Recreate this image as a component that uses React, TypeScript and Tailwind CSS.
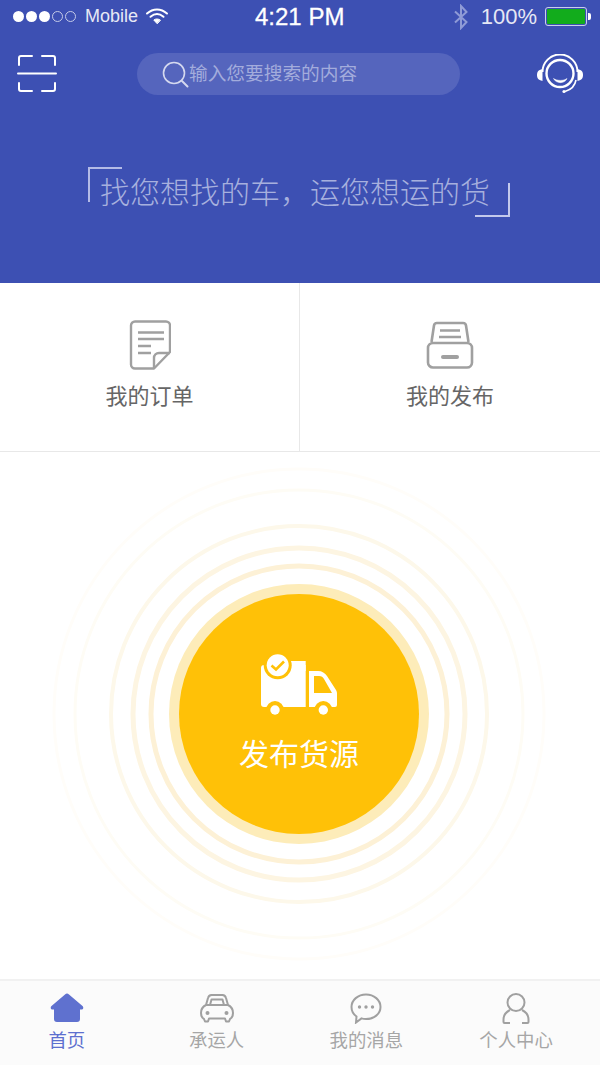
import React from "react";

const font = { fontFamily: '"Liberation Sans", "Noto Sans CJK SC", sans-serif' };

function Wifi() {
  return (
    <svg width="24" height="18" viewBox="0 0 24 18" fill="none" stroke="#fff" strokeLinecap="round">
      <path d="M2 6.5C8 1 16 1 22 6.5" strokeWidth="2" />
      <path d="M5.5 9.8C9.5 6.4 14.5 6.4 18.5 9.8" strokeWidth="2" />
      <path d="M12 16.5L8.8 13C10.8 11.6 13.2 11.6 15.2 13Z" fill="#fff" strokeWidth="1" />
    </svg>
  );
}

function StatusBar() {
  return (
    <div className="relative h-[33px] flex items-center text-white">
      <div className="flex items-center gap-[2px] pl-[13px] w-[250px]">
        {[1, 1, 1, 0, 0].map((f, i) => (
          <span
            key={i}
            className={f ? "w-[11px] h-[11px] rounded-full bg-white" : "w-[11px] h-[11px] rounded-full border border-[#c5cbe8]"}
          />
        ))}
        <span className="ml-[7px] text-[18px] text-[#e6e8f5]">Mobile</span>
        <span className="ml-[5px] -mt-[2px]"><Wifi /></span>
      </div>
      <span className="absolute left-[255px] top-[3px] text-[24px] leading-[27px] [-webkit-text-stroke:0.3px_white]">4:21 PM</span>
      <div className="ml-auto flex items-center pr-[9px]">
        <svg width="18" height="26" viewBox="0 0 18 26" fill="none" stroke="#8f9bd6" strokeWidth="2" className="mr-[11px] mt-[1px]">
          <path d="M3 7.5L14.5 18L9 24V2L14.5 8L3 18.5" />
        </svg>
        <span className="text-[22px] leading-[27px] text-[#e6e8f5]">100%</span>
        <div className="ml-[8px] w-[42px] h-[19px] border border-[#c9cfeb] rounded-[3px] p-[1px]">
          <div className="w-full h-full bg-[#12ac1c] rounded-[1px]" />
        </div>
        <span className="ml-[1px] w-[3px] h-[7px] bg-white rounded-r-[2px]" />
      </div>
    </div>
  );
}

function Scan() {
  return (
    <svg width="40" height="40" viewBox="0 0 40 40" fill="none" stroke="#fff" strokeWidth="2" strokeLinecap="round">
      <path d="M2 11V4a2 2 0 0 1 2-2h11M25 2h11a2 2 0 0 1 2 2v7" />
      <path d="M2 29v6a2 2 0 0 0 2 2h11M25 37h11a2 2 0 0 0 2-2v-6" />
      <path d="M1 19.5h38" />
    </svg>
  );
}

function Headset() {
  return (
    <svg width="46" height="40" viewBox="0 0 46 40" fill="none" stroke="#fff">
      <path d="M5.5 18A17.5 17.5 0 0 1 40.5 18" strokeWidth="2" />
      <circle cx="23" cy="19.5" r="13.5" strokeWidth="2.4" />
      <path d="M16.500 24.500C20 27 27 27 30 24.500C28 30 19 30 16.500 24.500Z" fill="#fff" strokeWidth="0.5" />
      <path d="M5.500 15C1 16 0 18 0 21S1 26 5.500 27Z" fill="#fff" stroke="none" />
      <path d="M40.500 15C45 16 46 18 46 21S45 26 40.500 27Z" fill="#fff" stroke="none" />
      <path d="M39 26C38 32 33 36 28 37.500" strokeWidth="1.6" />
      <circle cx="27" cy="37.500" r="1.600" fill="#fff" stroke="none" />
    </svg>
  );
}

function Header() {
  return (
    <div className="bg-[#3d50b3] h-[283px] flex flex-col">
      <StatusBar />
      <div className="h-[82px] flex items-center pl-[17px] pr-[17px]">
        <Scan />
        <div className="ml-[80px] w-[323px] h-[42px] rounded-full bg-[#5565bd] flex items-center pl-[25px]">
          <svg width="27" height="27" viewBox="0 0 27 27" fill="none" stroke="#d5d9ef" strokeWidth="1.6" strokeLinecap="round">
            <circle cx="12" cy="12" r="10.500" />
            <path d="M20 20l5.500 5.500" strokeWidth="2" />
          </svg>
          <span className="text-[18.7px] leading-[24px] text-[#a3acdc]">输入您要搜索的内容</span>
        </div>
        <span className="ml-auto"><Headset /></span>
      </div>
      <div className="relative ml-[88px] mt-[52px] w-[422px] h-[50px] flex items-center pl-[12px]">
        <span className="absolute left-0 top-0 w-[34px] h-[35px] border-t-2 border-l-2 border-[#b4bbe6]" />
        <span className="absolute right-0 bottom-0 w-[35px] h-[34px] border-b-2 border-r-2 border-[#c3c9ec]" />
        <span className="mt-[2px] text-[30px] leading-[36px] font-light whitespace-nowrap text-[#a7b0de]">找您想找的车，运您想运的货</span>
      </div>
    </div>
  );
}

function OrderIcon() {
  return (
    <svg width="42" height="50" viewBox="0 0 42 50" fill="none" stroke="#a0a0a0" strokeWidth="2.400" strokeLinejoin="round">
      <path d="M25 48.500H6a4 4 0 0 1-4-4V5.500a4 4 0 0 1 4-4h31a4 4 0 0 1 4 4V32Z" />
      <path d="M41 33H30a5 5 0 0 0-5 5v10" />
      <path d="M9 12.500h26M9 19h26M9 26h13M9 33h13" />
    </svg>
  );
}

function DrawerIcon() {
  return (
    <svg width="48" height="48" viewBox="0 0 48 48" fill="none" stroke="#a0a0a0" strokeWidth="2.600" strokeLinejoin="round">
      <path d="M5.500 21L8 4.500A3 3 0 0 1 11 2h26a3 3 0 0 1 3 2.500L42.500 21" />
      <path d="M14 9.500h20M13 16h22" />
      <rect x="2" y="22" width="44" height="24.500" rx="5" />
      <path d="M17 36h14" strokeWidth="4" strokeLinecap="round" />
    </svg>
  );
}

function QuickLinks() {
  return (
    <div className="grid grid-cols-2 h-[169px] border-b border-[#e8e8e8] bg-white">
      <div className="border-r border-[#e8e8e8] flex flex-col items-center pt-[37px]">
        <OrderIcon />
        <span className="mt-[11px] text-[22px] leading-[32px] text-[#666666]">我的订单</span>
      </div>
      <div className="flex flex-col items-center pt-[37px]">
        <div className="h-[50px] flex items-center"><DrawerIcon /></div>
        <span className="mt-[11px] text-[22px] leading-[32px] text-[#666666]">我的发布</span>
      </div>
    </div>
  );
}

function Truck() {
  return (
    <svg width="82" height="70" viewBox="0 0 82 70" fill="#fff">
      <path d="M3 18a3 3 0 0 1 3-3h41.700v42H6a3 3 0 0 1-3-3Z" />
      <path d="M24 11h23.700v10H24Z" />
      <circle cx="19.700" cy="15.300" r="14" fill="#ffc107" />
      <circle cx="19.700" cy="15.300" r="11" />
      <path d="M13.500 15.500l4.500 4 8-8" fill="none" stroke="#ffc107" strokeWidth="2.600" />
      <path d="M51 21h9c4 0 7 2 9 5l9 14c1 1.500 1 3 1 5v10a2 2 0 0 1-2 2H51Z" />
      <path d="M56 26h5c2.500 0 4 1 5 3l8 14H56Z" fill="#ffc107" />
      <circle cx="17" cy="60" r="9" fill="#ffc107" />
      <circle cx="65.300" cy="60" r="9" fill="#ffc107" />
      <circle cx="17" cy="60" r="4.700" />
      <circle cx="65.300" cy="60" r="4.700" />
    </svg>
  );
}

function Publish() {
  const rings = [
    { r: 245, w: 3, o: "#fffdf9" },
    { r: 224, w: 3, o: "#fefcf5" },
    { r: 188, w: 4, o: "#fdf8ea" },
    { r: 166, w: 5, o: "#fdf5e2" },
    { r: 148, w: 5, o: "#fdf1d6" },
  ];
  return (
    <div className="relative h-[527px] bg-white flex items-center justify-center overflow-hidden">
      <svg width="600" height="527" viewBox="0 0 600 527" className="absolute inset-0" fill="none">
        {rings.map((x) => (
          <circle key={x.r} cx="299" cy="262" r={x.r} stroke={x.o} strokeWidth={x.w} />
        ))}
      </svg>
      <div className="relative -ml-[2px] -mt-[3px] w-[260px] h-[260px] rounded-full bg-[#fdecb9] flex items-center justify-center">
        <div className="w-[240px] h-[240px] rounded-full bg-[#ffc107] flex flex-col items-center pt-[56px]">
          <Truck />
          <span className="mt-[16px] text-[30px] leading-[38px] text-white">发布货源</span>
        </div>
      </div>
    </div>
  );
}

function Tab({ icon, label, active }: { icon: React.ReactNode; label: string; active?: boolean }) {
  return (
    <div className="flex flex-col items-center pt-[11px]">
      <div className="h-[32px] flex items-center justify-center">{icon}</div>
      <span className={active ? "mt-[4px] text-[18.400px] leading-[26px] text-[#5d6fcf]" : "mt-[4px] text-[18.400px] leading-[26px] text-[#a6a6a6]"}>
        {label}
      </span>
    </div>
  );
}

function TabBar() {
  return (
    <div className="h-[86px] bg-[#fbfbfb] border-t-2 border-[#f1f1f1] overflow-hidden">
      <div className="-ml-[8px] w-[599px] grid grid-cols-4">
        <Tab
          active
          label="首页"
          icon={
            <svg width="34" height="30" viewBox="0 0 34 30" fill="#5f71cf">
              <path d="M15 1.500a3 3 0 0 1 4 0L32.500 13c1.500 1.400.7 3.500-1 3.500H30V26a3 3 0 0 1-3 3H7a3 3 0 0 1-3-3v-9.500H2.500c-1.700 0-2.500-2.100-1-3.500Z" />
            </svg>
          }
        />
        <Tab
          label="承运人"
          icon={
            <svg width="34" height="29" viewBox="0 0 34 29" fill="none" stroke="#a0a0a0" strokeWidth="2" strokeLinejoin="round">
              <path d="M6 11L8 4a4 4 0 0 1 3.500-3h11A4 4 0 0 1 26 4l2 7c3 1.500 5 4.500 5 8 0 3-1 5-3 6l-1 2.500h-3l-1-3H9l-1 3H5l-1-2.500c-2-1-3-3-3-6 0-3.500 2-6.500 5-8Z" />
              <path d="M10 11l1.500-5.500h11L24 11Z" />
              <path d="M6 11h22" />
              <circle cx="7.500" cy="19" r="2" fill="#a0a0a0" stroke="none" />
              <circle cx="26.500" cy="19" r="2" fill="#a0a0a0" stroke="none" />
            </svg>
          }
        />
        <Tab
          label="我的消息"
          icon={
            <svg width="32" height="31" viewBox="0 0 32 31" fill="none" stroke="#a0a0a0" strokeWidth="2">
              <path d="M16 1.500c8 0 14.500 5.500 14.500 12.500S24 26 16 26c-1.700 0-3.200-.2-4.500-.6L6 29.500l.5-6C3 21 1.500 17.700 1.500 14 1.500 7 8 1.500 16 1.500Z" />
              <circle cx="9.500" cy="14" r="1.700" fill="#a0a0a0" stroke="none" />
              <circle cx="16" cy="14" r="1.700" fill="#a0a0a0" stroke="none" />
              <circle cx="22.500" cy="14" r="1.700" fill="#a0a0a0" stroke="none" />
            </svg>
          }
        />
        <Tab
          label="个人中心"
          icon={
            <svg width="28" height="31" viewBox="0 0 28 31" fill="none" stroke="#a0a0a0" strokeWidth="2">
              <circle cx="14" cy="9.500" r="8.500" />
              <path d="M8 17C4 19 1.500 22.500 1.500 26.500V29a1 1 0 0 0 1 1H8M20 17c4 2 6.500 5.500 6.500 9.500V29a1 1 0 0 1-1 1H20" />
            </svg>
          }
        />
      </div>
    </div>
  );
}

export default function App() {
  return (
    <div className="w-[600px] h-[1065px] bg-white overflow-hidden" style={font}>
      <Header />
      <QuickLinks />
      <Publish />
      <TabBar />
    </div>
  );
}
